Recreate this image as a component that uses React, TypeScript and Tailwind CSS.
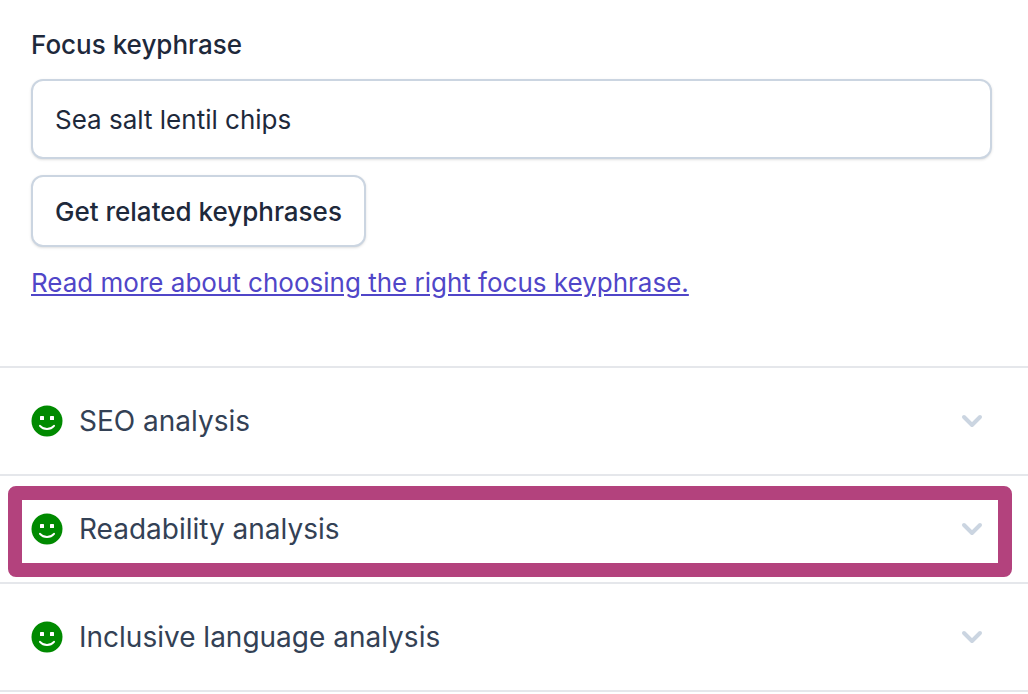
import { useState } from "react";

const sections = [
    { title: "SEO analysis", highlighted: false },
    { title: "Readability analysis", highlighted: true },
    { title: "Inclusive language analysis", highlighted: false },
];

function SmileyIcon() {
    return (
        <svg viewBox="0 0 32 32" className="size-8 shrink-0" aria-hidden="true">
            <circle cx="16" cy="16" r="15.5" fill="#008a00" />
            <rect x="9" y="11" width="4" height="4" rx="0.6" fill="#fff" />
            <rect x="19" y="11" width="4" height="4" rx="0.6" fill="#fff" />
            <path d="M9 20.8C12.6 25 19.4 25 23 20.8" fill="none" stroke="#fff" strokeWidth="2" strokeLinecap="round" />
        </svg>
    );
}

function ChevronIcon() {
    return (
        <svg viewBox="0 0 40 40" className="size-10 shrink-0" aria-hidden="true">
            <path d="M12 16L20 24L28 16" fill="none" stroke="#cbd5e1" strokeWidth="4" strokeLinecap="round" strokeLinejoin="round" />
        </svg>
    );
}

export default function App() {
    const [keyphrase, setKeyphrase] = useState("Sea salt lentil chips");

    return (
        <main className="bg-white font-['Inter',sans-serif] text-[26px] leading-8 text-[#1e293b]">
            <div className="flex flex-col items-start pt-[29px] pr-9 pb-[67px] pl-[31px]">
                <label htmlFor="focus-keyphrase" className="font-medium">
                    Focus keyphrase
                </label>
                <input
                    id="focus-keyphrase"
                    type="text"
                    value={keyphrase}
                    onChange={(e) => setKeyphrase(e.target.value)}
                    className="mt-[18px] h-20 w-full rounded-xl border-2 border-[#cbd5e1] bg-white px-[22px] shadow-sm outline-none"
                />
                <button type="button" className="mt-4 h-18 rounded-xl border-2 border-[#cbd5e1] bg-white px-[22px] pt-[2px] font-medium shadow-sm">
                    Get related keyphrases
                </button>
                <a href="#" className="mt-5 text-[#5046c8] underline">
                    Read more about choosing the right focus keyphrase.
                </a>
            </div>

            <div className="border-b-2 border-[#e5e7eb]">
                {sections.map((section) => (
                    <div key={section.title} className="relative border-t-2 border-[#e5e7eb]">
                        <button type="button" aria-expanded={false} className="flex w-full items-center py-[33px] pr-9 pl-[31px] text-left text-[28px] leading-10 text-[#334155]">
                            <SmileyIcon />
                            <span className="ml-4 grow">{section.title}</span>
                            <ChevronIcon />
                        </button>
                        {section.highlighted && (
                            <div className="pointer-events-none absolute top-[10px] right-4 bottom-[5px] left-2 rounded-lg border-14 border-[#b3427d]" />
                        )}
                    </div>
                ))}
            </div>
        </main>
    );
}
